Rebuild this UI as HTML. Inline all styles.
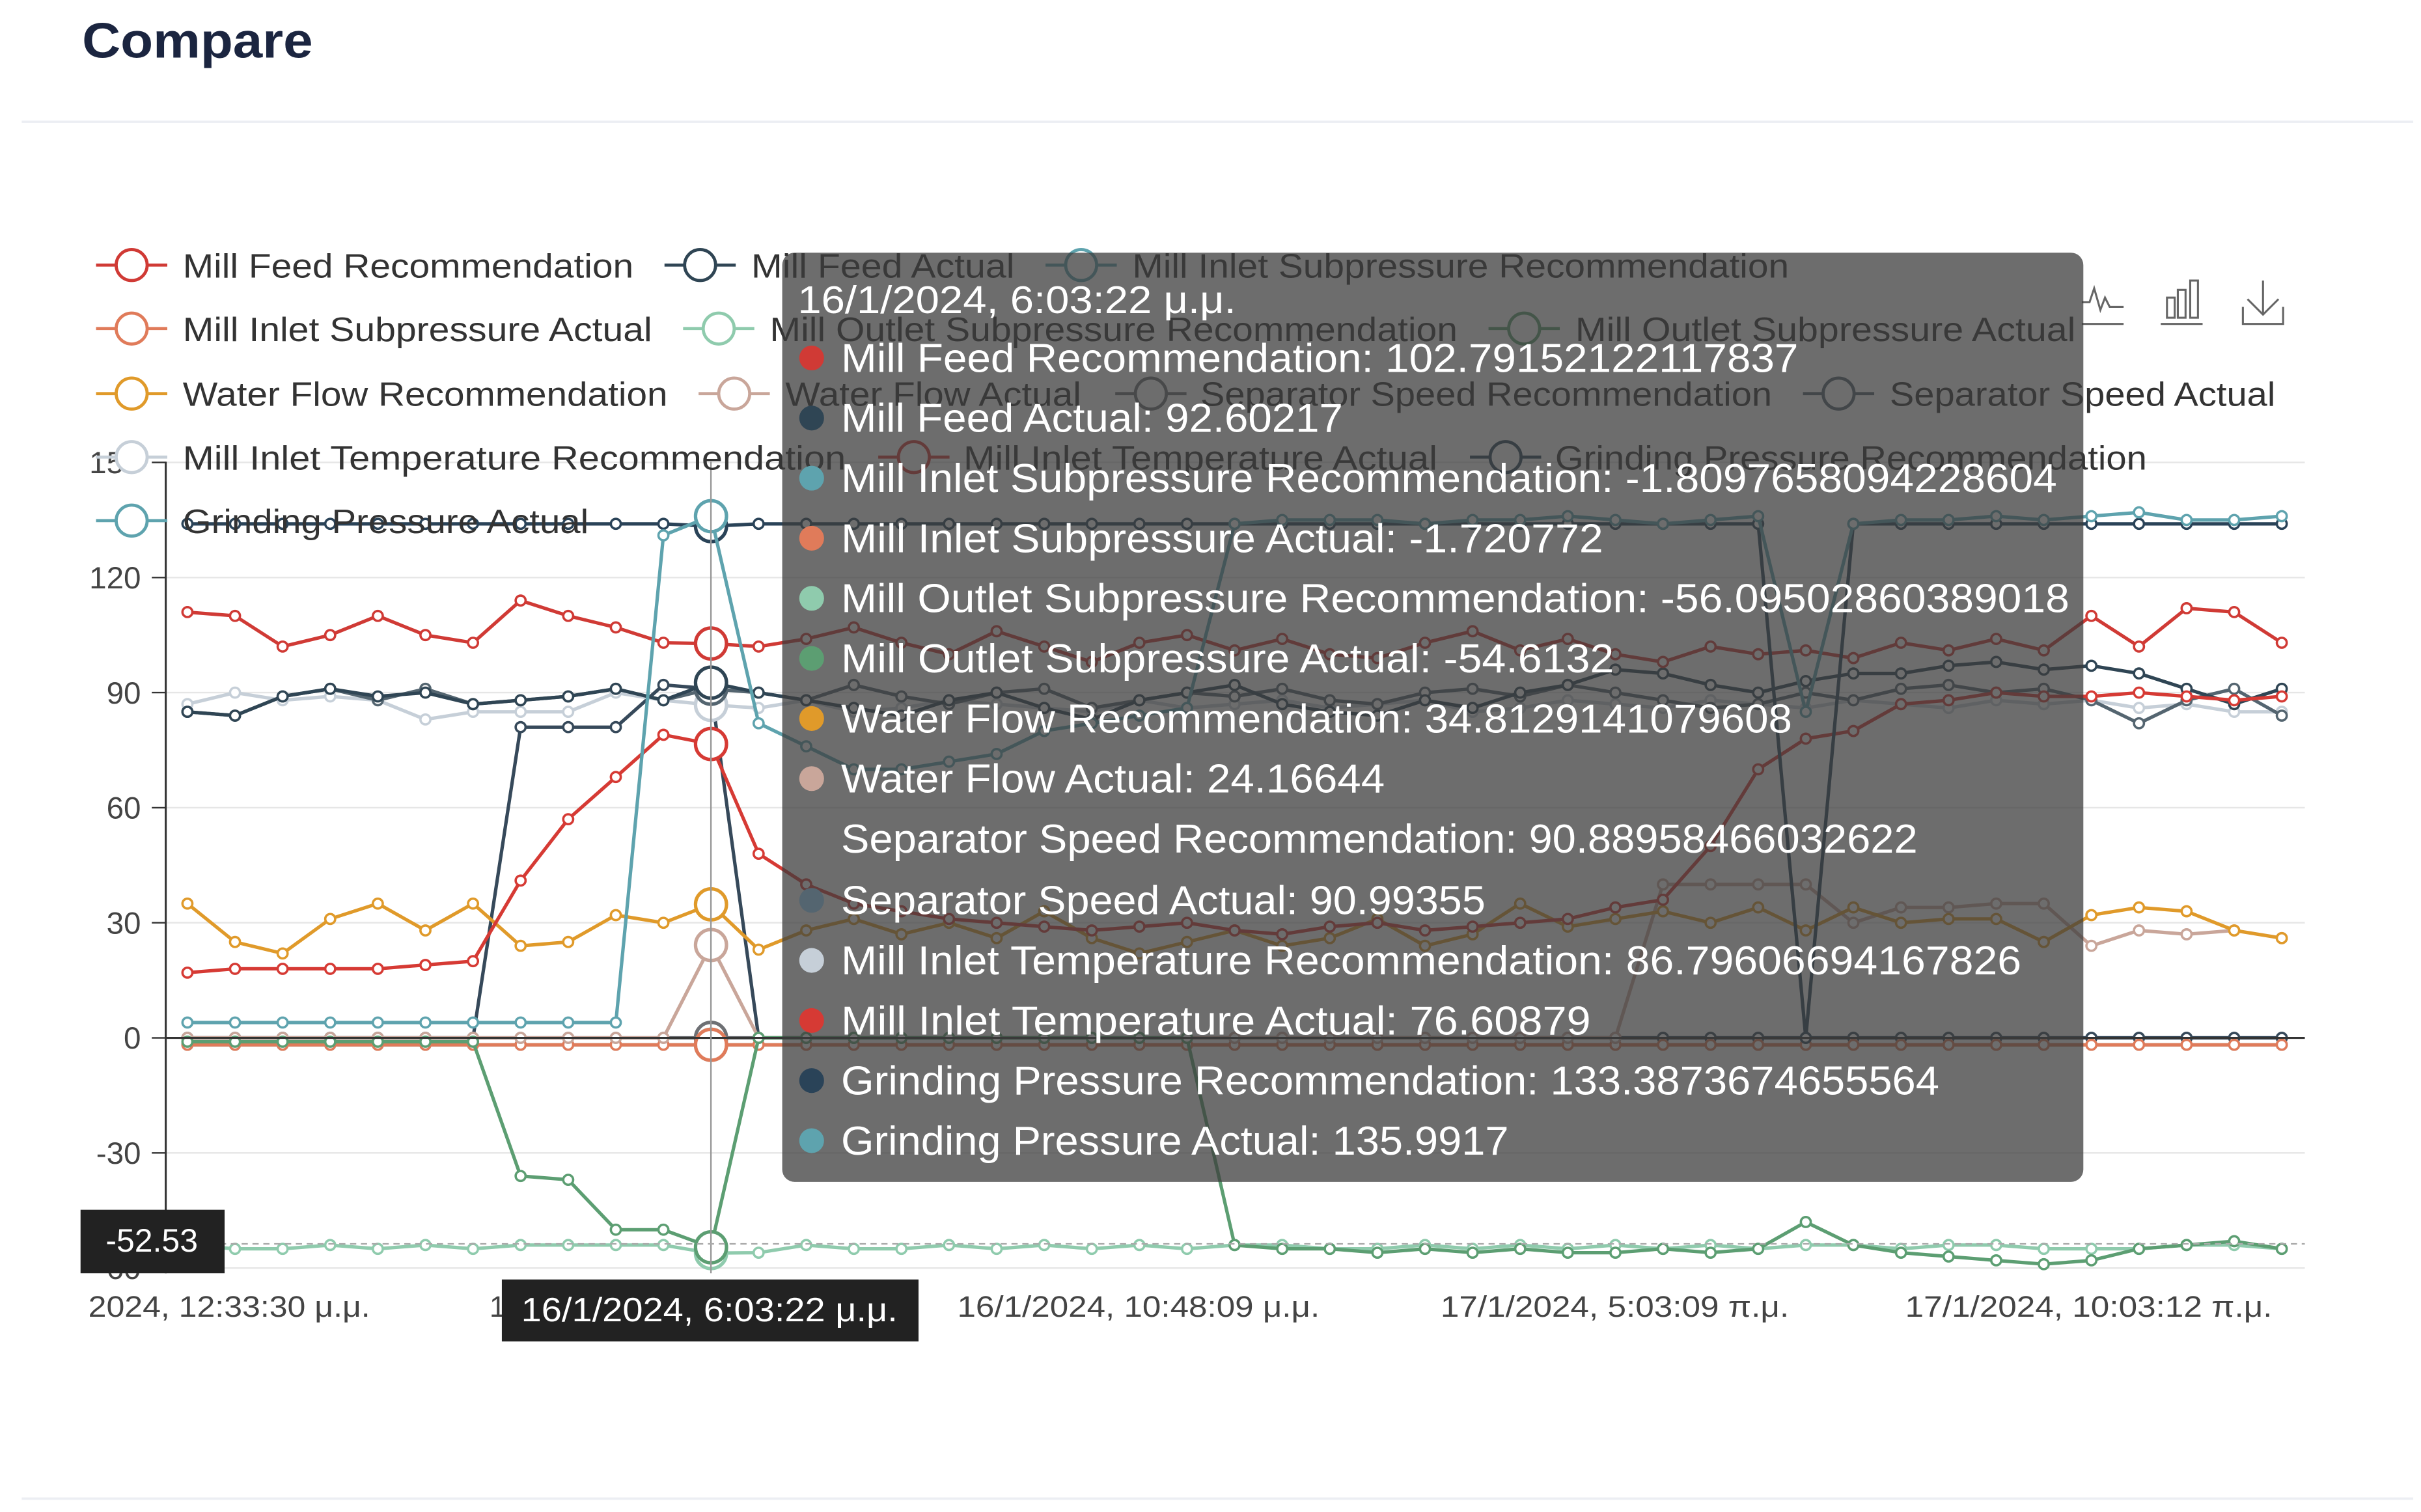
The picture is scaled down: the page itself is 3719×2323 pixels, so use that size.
<!DOCTYPE html>
<html><head><meta charset="utf-8">
<style>
html,body{margin:0;padding:0;background:#fff;}
svg{display:block;}
text{font-family:"Liberation Sans",sans-serif;}
</style></head>
<body>
<svg id="s" width="3719" height="2323" viewBox="0 0 1563 976" xmlns="http://www.w3.org/2000/svg">
<rect width="1563" height="976" fill="#fff"/>
<text x="53" y="37" font-size="32" font-weight="bold" fill="#1b2540" textLength="149" lengthAdjust="spacingAndGlyphs">Compare</text>
<line x1="14" y1="78.5" x2="1558" y2="78.5" stroke="#eceef3" stroke-width="1.5"/>
<line x1="14" y1="967.5" x2="1558" y2="967.5" stroke="#eceef3" stroke-width="1.5"/>
<g id="grid"></g>
<g id="series"></g>
<g id="legend"></g>
<!-- toolbox -->
<g fill="none" stroke="#666" stroke-width="1.3">
<polyline points="1344,195 1349,195 1352,186 1356,200 1359,192 1362,198 1371,198"/>
<line x1="1344" y1="209" x2="1371" y2="209"/>
<rect x="1399" y="192" width="5" height="13"/><rect x="1406" y="187" width="5" height="18"/><rect x="1414" y="181" width="5" height="24"/>
<line x1="1395" y1="209" x2="1422" y2="209"/>
<line x1="1461" y1="181" x2="1461" y2="203"/>
<polyline points="1451,193 1461,203 1471,193"/>
<polyline points="1448,198 1448,209 1474,209 1474,198"/>
</g>
<g id="tt"></g>
</svg>
<script>
var NS="http://www.w3.org/2000/svg";
function el(p,tag,a,txt){var e=document.createElementNS(NS,tag);for(var k in a)e.setAttribute(k,a[k]);if(txt!=null)e.textContent=txt;p.appendChild(e);return e;}
var G=document.getElementById('grid'),S=document.getElementById('series'),L=document.getElementById('legend'),T=document.getElementById('tt');
function Y(v){return 670-v*2.477;}
function X(i){return 121+i*30.73;}
// grid
[150,120,90,60,30,-30,-60].forEach(function(v){el(G,'line',{x1:107,x2:1488,y1:Y(v),y2:Y(v),stroke:'#e6e6e6','stroke-width':1});});
el(G,'line',{x1:107,x2:107,y1:298,y2:822,stroke:'#333','stroke-width':1.3});
[150,120,90,60,30,0,-30,-60].forEach(function(v){el(G,'line',{x1:98,x2:107,y1:Y(v),y2:Y(v),stroke:'#333','stroke-width':1});
 el(G,'text',{x:91,y:Y(v)+7,'font-size':20,fill:'#444','text-anchor':'end'},String(v));});
[['2024, 12:33:30 μ.μ.',57,239],['16/1/2024, 10:48:09 μ.μ.',618,852],['17/1/2024, 5:03:09 π.μ.',930,1155],['17/1/2024, 10:03:12 π.μ.',1230,1467]].forEach(function(t){
 el(G,'text',{x:t[1],y:850,'font-size':19,fill:'#444',textLength:t[2]-t[1],lengthAdjust:'spacingAndGlyphs'},t[0]);});
el(G,'text',{x:316,y:850,'font-size':19,fill:'#444'},'1');
function fill(a,n){while(a.length<45)a.push(a[a.length-1]);return a;}
function mid(start,vals){return vals;}
var D={
mfr:['#d03a35',[111,110,102,105,110,105,103,114,110,107,103,102.8,102,104,107,103,100,106,102,98,103,105,101,104,100,99,103,106,101,104,100,98,102,100,101,99,103,101,104,101,110,102,112,111,103]],
mfa:['#2f4554',[85,84,89,91,89,90,87,88,89,91,88,92.6,90,88,86,84,88,90,86,83,88,90,92,87,85,84,88,86,90,92,96,95,92,90,93,95,95,97,98,96,97,95,91,87,91]],
misr:['#5ea3ae',[-1.8,-1.8,-1.8,-1.8,-1.8,-1.8,-1.8,-1.8,-1.8,-1.8,-1.8,-1.8,-1.8,-1.8,-1.8,-1.8,-1.8,-1.8,-1.8,-1.8,-1.8,-1.8,-1.8,-1.8,-1.8,-1.8,-1.8,-1.8,-1.8,-1.8,-1.8,-1.8,-1.8,-1.8,-1.8,-1.8,-1.8,-1.8,-1.8,-1.8,-1.8,-1.8,-1.8,-1.8,-1.8]],
misa:['#e07b5a',fill([-1,-1,-1,-1,-1,-1,-1,-1.7,-1.7,-2,-2,-1.7],45).map(function(v){return -1.8;})],
mosr:['#8fcbad',[-54,-55,-55,-54,-55,-54,-55,-54,-54,-54,-54,-56.1,-56,-54,-55,-55,-54,-55,-54,-55,-54,-55,-54,-54,-55,-55,-54,-55,-54,-55,-54,-55,-54,-55,-54,-54,-55,-54,-54,-55,-55,-55,-54,-54,-55]],
mosa:['#5c9e72',[-1,-1,-1,-1,-1,-1,-1,-36,-37,-50,-50,-54.6,0,0,0,0,0,0,0,0,0,0,-54,-55,-55,-56,-55,-56,-55,-56,-56,-55,-56,-55,-48,-54,-56,-57,-58,-59,-58,-55,-54,-53,-55]],
wfr:['#e09a2a',[35,25,22,31,35,28,35,24,25,32,30,34.8,23,28,31,27,30,26,33,26,22,25,28,24,26,31,24,27,35,29,31,33,30,34,28,34,30,31,31,25,32,34,33,28,26]],
wfa:['#c9a69a',[0,0,0,0,0,0,0,0,0,0,0,24.2,0,0,0,0,0,0,0,0,0,0,0,0,0,0,0,0,0,0,0,40,40,40,40,30,34,34,35,35,24,28,27,28,26]],
ssr:['#6e7074',[0,0,0,0,0,0,0,0,0,0,0,0,0,0,0,0,0,0,0,0,0,0,0,0,0,0,0,0,0,0,0,0,0,0,0,0,0,0,0,0,0,0,0,0,0]],
ssa:['#546570',[85,84,89,91,88,91,87,88,89,91,88,91,90,88,92,89,87,90,91,86,88,90,89,91,88,87,90,91,89,92,90,88,86,87,90,88,91,92,90,91,88,82,88,91,84]],
mitr:['#c6cfd8',[87,90,88,89,88,83,85,85,85,90,88,86.8,86,88,85,86,88,87,86,85,88,86,87,88,86,87,88,85,86,88,87,86,88,87,86,88,87,86,88,87,88,86,87,85,85]],
mita:['#d63a34',[17,18,18,18,18,19,20,41,57,68,79,76.6,48,40,35,33,31,30,29,28,29,30,28,27,29,30,28,29,30,31,34,36,50,70,78,80,87,88,90,89,89,90,89,88,89]],
gpr:['#2a4358',[134,134,134,134,134,134,134,134,134,134,134,133.4,134,134,134,134,134,134,134,134,134,134,134,134,134,134,134,134,134,134,134,134,134,134,0,134,134,134,134,134,134,134,134,134,134]],
gpa:['#5ea3ae',[4,4,4,4,4,4,4,4,4,4,131,136,82,76,70,70,72,74,80,82,84,86,134,135,135,135,134,135,135,136,135,134,135,136,85,134,135,135,136,135,136,137,135,135,136]],
sep2:['#36495a',[0,0,0,0,0,0,0,81,81,81,92,91,0,0,0,0,0,0,0,0,0,0,0,0,0,0,0,0,0,0,0,0,0,0,0,0,0,0,0,0,0,0,0,0,0]]
};
var order=['ssr','sep2','misr','misa','wfa','mosr','mosa','wfr','mitr','ssa','mfa','mita','mfr','gpr','gpa'];
order.forEach(function(k){var c=D[k][0],d=D[k][1];var pts=d.map(function(v,i){return X(i).toFixed(1)+','+Y(v).toFixed(1);}).join(' ');
 el(S,'polyline',{points:pts,fill:'none',stroke:c,'stroke-width':2.2,'stroke-linejoin':'round'});
 d.forEach(function(v,i){el(S,'circle',{cx:X(i),cy:Y(v),r:i==11?10:3.2,fill:'#fff',stroke:c,'stroke-width':i==11?2.2:1.5});});});
// zero axis line
el(S,'line',{x1:107,x2:1488,y1:670,y2:670,stroke:'#333','stroke-width':1.3});
// pointer lines
el(S,'line',{x1:459,x2:459,y1:298,y2:822,stroke:'#999','stroke-width':1});
el(S,'line',{x1:107,x2:1488,y1:803,y2:803,stroke:'#aaa','stroke-width':1,'stroke-dasharray':'4,3'});
// legend
var lg=[
['Mill Feed Recommendation',85,118,409,171,'#d03a35'],['Mill Feed Actual',452,485,655,171,'#2f4554'],['Mill Inlet Subpressure Recommendation',698,731,1155,171,'#5ea3ae'],
['Mill Inlet Subpressure Actual',85,118,421,212,'#e07b5a'],['Mill Outlet Subpressure Recommendation',464,497,941,212,'#8fcbad'],['Mill Outlet Subpressure Actual',984,1017,1340,212,'#5c9e72'],
['Water Flow Recommendation',85,118,431,254,'#e09a2a'],['Water Flow Actual',474,507,698,254,'#c9a69a'],['Separator Speed Recommendation',743,775,1144,254,'#6e7074'],['Separator Speed Actual',1187,1220,1469,254,'#546570'],
['Mill Inlet Temperature Recommendation',85,118,546,295,'#c6cfd8'],['Mill Inlet Temperature Actual',590,622,928,295,'#d63a34'],['Grinding Pressure Recommendation',972,1004,1386,295,'#2a4358'],
['Grinding Pressure Actual',85,118,380,336,'#5ea3ae']];
lg.forEach(function(l){el(L,'line',{x1:l[1]-23,x2:l[1]+23,y1:l[4],y2:l[4],stroke:l[5],'stroke-width':2});
 el(L,'circle',{cx:l[1],cy:l[4],r:10,fill:'#fff',stroke:l[5],'stroke-width':2});
 el(L,'text',{x:l[2],y:l[4]+8,'font-size':22,fill:'#333',textLength:l[3]-l[2],lengthAdjust:'spacingAndGlyphs'},l[0]);});
// tooltip
el(T,'rect',{x:505,y:163,width:840,height:600,rx:8,fill:'rgba(60,60,60,0.75)'});
el(T,'text',{x:515,y:202,'font-size':25,fill:'#fff',textLength:283,lengthAdjust:'spacingAndGlyphs'},'16/1/2024, 6:03:22 μ.μ.');
var tr=[['Mill Feed Recommendation: 102.79152122117837',1161,'#d03a35'],['Mill Feed Actual: 92.60217',867,'#2f4554'],['Mill Inlet Subpressure Recommendation: -1.8097658094228604',1328,'#5ea3ae'],
['Mill Inlet Subpressure Actual: -1.720772',1035,'#e07b5a'],['Mill Outlet Subpressure Recommendation: -56.09502860389018',1336,'#8fcbad'],['Mill Outlet Subpressure Actual: -54.6132',1042,'#5c9e72'],
['Water Flow Recommendation: 34.8129141079608',1157,'#e09a2a'],['Water Flow Actual: 24.16644',894,'#c9a69a'],['Separator Speed Recommendation: 90.88958466032622',1238,'#6e7074'],
['Separator Speed Actual: 90.99355',959,'#546570'],['Mill Inlet Temperature Recommendation: 86.79606694167826',1305,'#c6cfd8'],['Mill Inlet Temperature Actual: 76.60879',1027,'#d63a34'],
['Grinding Pressure Recommendation: 133.3873674655564',1252,'#2a4358'],['Grinding Pressure Actual: 135.9917',974,'#5ea3ae']];
tr.forEach(function(r,i){var cy=231+i*38.8;if(i>=9)cy+=1;
 if(i!=8)el(T,'circle',{cx:524,cy:cy,r:8,fill:r[2]});
 el(T,'text',{x:543,y:cy+9,'font-size':26,fill:'#fff',textLength:r[1]-543,lengthAdjust:'spacingAndGlyphs'},r[0]);});
// axis pointer labels
el(T,'rect',{x:52,y:781,width:93,height:41,fill:'#222'});
el(T,'text',{x:98,y:808,'font-size':21,fill:'#fff','text-anchor':'middle'},'-52.53');
el(T,'rect',{x:324,y:826,width:269,height:40,fill:'#222'});
el(T,'text',{x:458,y:853,'font-size':22,fill:'#fff','text-anchor':'middle',textLength:243,lengthAdjust:'spacingAndGlyphs'},'16/1/2024, 6:03:22 μ.μ.');
</script>
</body></html>
